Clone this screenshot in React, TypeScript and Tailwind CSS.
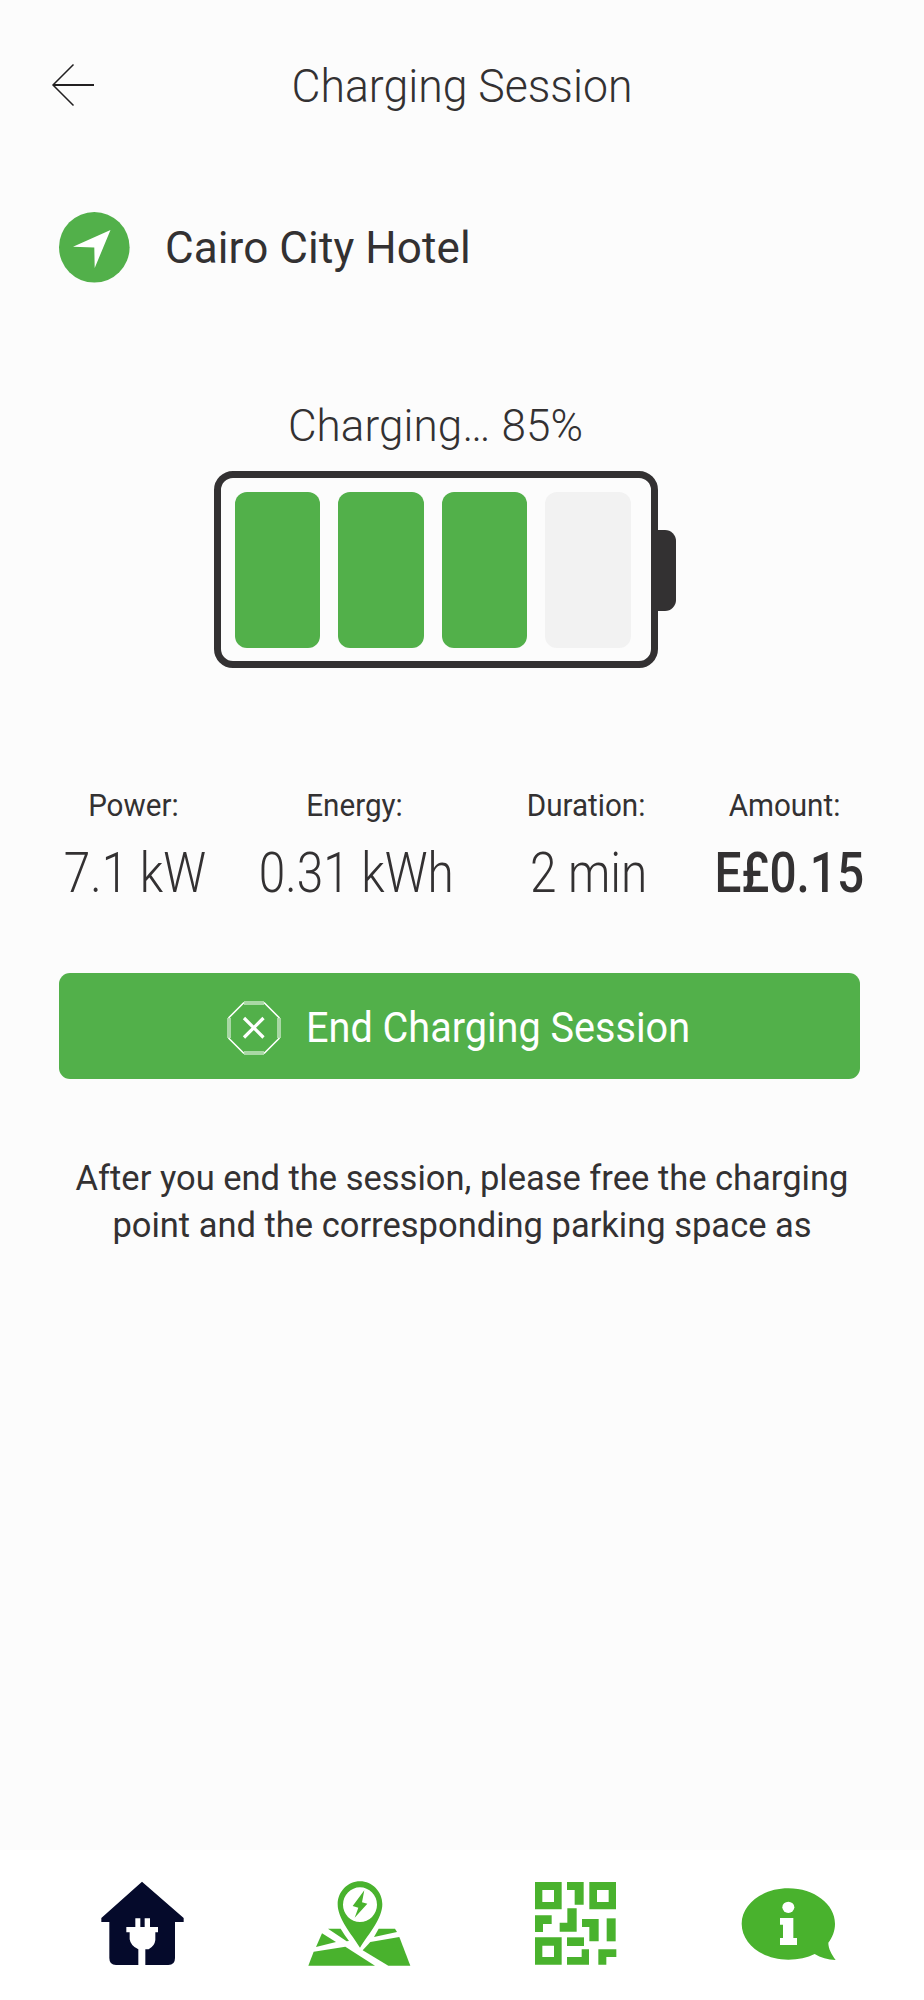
const stats = [
    { label: 'Power:', value: '7.1 kW', nudge: 'pl-[4px]', weight: 'font-light' },
    { label: 'Energy:', value: '0.31 kWh', nudge: 'pl-[5px]', weight: 'font-light' },
    { label: 'Duration:', value: '2 min', nudge: 'pl-[5px]', weight: 'font-light' },
    { label: 'Amount:', value: 'E£0.15', nudge: 'pl-[10px]', weight: 'font-medium' },
];

const cells = [true, true, true, false];

function BackIcon() {
    return (
        <svg className="w-[44px] h-[44px]" viewBox="0 0 44 44" fill="none" stroke="#222021">
            <path d="M2 22H43" strokeWidth="2" />
            <path d="M22.5 1.5L2 22L22.5 42.5" strokeWidth="1.5" />
        </svg>
    );
}

function LocationIcon() {
    return (
        <svg className="w-[71px] h-[71px]" viewBox="0 0 71 71">
            <circle cx="35.3" cy="35.3" r="35.3" fill="#52b04a" />
            <path d="M51.5 18L14 34.7L35.3 35.6L35.7 56Z" fill="#fff" />
        </svg>
    );
}

function StopIcon() {
    return (
        <svg className="w-[54px] h-[54px]" viewBox="0 0 54 54" fill="none" stroke="#fff">
            <path d="M17 2H37M17 52H37M2 17V37M52 17V37" strokeWidth="4" strokeOpacity="0.5" />
            <path d="M17 1.5L1.5 17M37 1.5L52.5 17M1.5 37L17 52.5M52.5 37L37 52.5" strokeWidth="1.6" />
            <path d="M17 17L36.5 36.5M36.5 17L17 36.5" strokeWidth="3.2" />
        </svg>
    );
}

function HomeIcon() {
    return (
        <svg className="w-[85px] h-[85px]" viewBox="60 123 255 255">
            <path
                d="M186 125L311 234V246H285V354Q285 375 265 375H108Q88 375 88 354V246H64V234Z"
                fill="#050a2b"
            />
            <path
                d="M166 235H181V261H194V235H210V261H234V277H226V300Q224 318 206 328H196V378H175V328Q152 318 149 298V277H139V261H166Z"
                fill="#fff"
            />
        </svg>
    );
}

function MapIcon() {
    return (
        <svg className="w-[103px] h-[88px]" viewBox="53 117 309 264" fill="#49b22d">
            <path
                fillRule="evenodd"
                d="M209 121C246 121 276 152 276 190C276 232 236 278 209 320C182 278 142 232 142 190C142 152 172 121 209 121ZM209 139A51 52 0 1 0 209 243A51 52 0 1 0 209 139Z"
            />
            <path d="M222 148L187 195L204 200L193 230L231 188L215 184Z" />
            <path d="M113 263H151Q163 283 176 300L169 301Z" />
            <path d="M265 263H314L320 273L251 288Z" />
            <path d="M95 277L137 303L77 318Z" />
            <path d="M70 332L165 317L254 374H54Z" />
            <path d="M240 303L327 288L360 374H294L217 328Z" />
        </svg>
    );
}

function QrIcon() {
    return (
        <svg className="w-[84px] h-[85px]" viewBox="72 123 252 255" fill="#49b22d">
            <path
                fillRule="evenodd"
                d="M75 126H155V208H75ZM97 150V186H132V150ZM238 126H318V208H238ZM261 150V186H296V150ZM75 292H155V374H75ZM97 317V351H132V317Z"
            />
            <path d="M171 126H221V194H194V150H171Z" />
            <path d="M172 205H200V275H149V248H172Z" />
            <path d="M75 226H125V252H99V276H75Z" />
            <path d="M216 237H266V304H238V261H216Z" />
            <path d="M290 235H317V304H290Z" />
            <path d="M171 292H222V318H171Z" />
            <path d="M215 328H237V374H171V351H215Z" />
            <path d="M265 328H319V351H289V374H265Z" />
        </svg>
    );
}

function InfoIcon() {
    return (
        <svg className="w-[95px] h-[74px]" viewBox="63 138 285 222">
            <path
                d="M205 142C283 142 345 190 345 248C345 270 337 289 325 305C325 323 335 340 347 357C323 357 302 350 284 339C262 350 235 356 205 356C127 356 65 308 65 248C65 190 127 142 205 142Z"
                fill="#49b22d"
            />
            <ellipse cx="205" cy="199" rx="18" ry="17" fill="#fff" />
            <path d="M180 231H220V291H231V312H180V291H189V251H180Z" fill="#fff" />
        </svg>
    );
}

export default function App() {
    return (
        <div className="w-[924px] h-[2000px] flex flex-col overflow-hidden bg-[#fcfcfc] text-[#333132] font-['Roboto',sans-serif]">
            {/* Header */}
            <header className="h-[170px] px-[51px] grid grid-cols-[1fr_auto_1fr] items-center">
                <button className="justify-self-start">
                    <BackIcon />
                </button>
                <h1 className="pt-[1px] text-[46px] leading-[60px] font-light scale-x-[0.969]">Charging Session</h1>
            </header>

            {/* Location */}
            <div className="mt-[42px] pl-[59px] flex items-center gap-[35px]">
                <LocationIcon />
                <p className="pt-[1px] text-[44px] leading-[60px] tracking-[0.1px]">Cairo City Hotel</p>
            </div>

            {/* Battery */}
            <section className="mt-[118px] pl-[214px]">
                <p className="w-[443px] text-center text-[44px] leading-[50px] tracking-[0.1px] font-light">Charging… 85%</p>
                <div className="mt-[20px] flex items-center">
                    <div className="w-[443.5px] h-[197px] flex items-center justify-center gap-[18px] border-[7px] border-[#333132] rounded-[19px] pt-[1px] pr-[6px]">
                        {cells.map((filled, i) => (
                            <div
                                key={i}
                                className={`w-[85.5px] h-[155.5px] rounded-[12px] ${filled ? 'bg-[#52b04a]' : 'bg-[#f2f2f2]'}`}
                            />
                        ))}
                    </div>
                    <div className="w-[18px] h-[81px] mt-[2px] rounded-r-[11px] bg-[#333132]" />
                </div>
            </section>

            {/* Session stats */}
            <div className="mt-[118px] ml-[24px] grid grid-cols-[218px_224px_240px_156px] text-center whitespace-nowrap">
                {stats.map((s) => (
                    <div key={s.label} className="flex flex-col items-center">
                        <p className="text-[31px] leading-[40px] scale-x-[0.955]">{s.label}</p>
                        <p className={`mt-[17px] text-[55px] leading-[60px] ${s.nudge}`}>
                            <span className={`inline-block scale-x-[0.868] ${s.weight}`}>{s.value}</span>
                        </p>
                    </div>
                ))}
            </div>

            <button className="mt-[70px] ml-[59px] w-[801px] h-[106px] pt-[4px] pr-[2px] flex items-center justify-center gap-[25px] rounded-[11px] bg-[#52b04a] text-white">
                <StopIcon />
                <span className="-mr-[23px] text-[42px] leading-[50px] origin-left scale-x-[0.943]">End Charging Session</span>
            </button>

            <p className="mt-[76px] text-center text-[34.5px] leading-[47px]">
                After you end the session, please free the charging
                <br />
                point and the corresponding parking space as
            </p>

            {/* Bottom nav */}
            <nav className="mt-auto h-[150px] pl-[100px] pr-[88px] pb-[3px] flex items-center justify-between bg-white">
                <HomeIcon />
                <MapIcon />
                <QrIcon />
                <InfoIcon />
            </nav>
        </div>
    );
}
